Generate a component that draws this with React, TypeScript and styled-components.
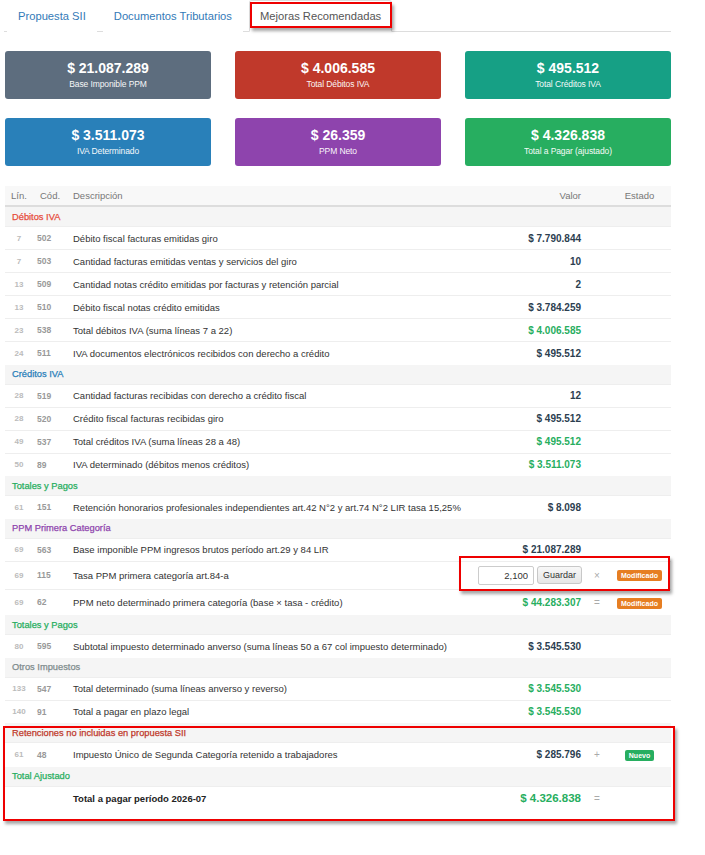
import { JSX } from "react";
import styled, { createGlobalStyle } from "styled-components";

type Tone = "dark" | "green";
type Badge = "mod" | "new";

type SectionRow = { kind: "section"; label: string; color: string };
type ItemRow = {
  kind: "item";
  lin?: string;
  cod?: string;
  desc: string;
  value: string;
  tone?: Tone;
  op?: string;
  badge?: Badge;
  edit?: boolean;
  total?: boolean;
};
type Row = SectionRow | ItemRow;

const GlobalStyle = createGlobalStyle`
  html, body {
    margin: 0;
    padding: 0;
    background: #fff;
  }
  body {
    font-family: "Liberation Sans", Arial, sans-serif;
    color: #333;
  }
`;

const Page = styled.div`
  width: 666px;
  padding: 0 0 30px 5px;
`;

const Nav = styled.ul`
  display: flex;
  list-style: none;
  margin: 0 0 0 -1px;
  padding: 0 0 0 3px;
  border-bottom: 1px solid #ddd;
`;

const TabLink = styled.li<{ $active?: boolean }>`
  position: relative;
  margin: 0 6px -1px 0;
  padding: 8px 10px 8px;
  line-height: 14px;
  font-size: 11.2px;
  border: 1px solid ${(p) => (p.$active ? "#ddd" : "transparent")};
  border-bottom-color: transparent;
  border-radius: 3px 3px 0 0;
  background: #fff;
  color: ${(p) => (p.$active ? "#555" : "#337ab7")};
  cursor: pointer;
`;

const Mark = styled.div`
  position: absolute;
  border: 2px solid #ee0000;
  box-shadow: 2px 3px 3px rgba(0, 0, 0, 0.35);
  pointer-events: none;
`;

const TabMark = styled(Mark)`
  top: 1px;
  left: 0;
  right: -1px;
  bottom: 3px;
`;

const Cards = styled.div`
  display: grid;
  grid-template-columns: repeat(3, 206px);
  column-gap: 24px;
  row-gap: 19px;
  margin-top: 19px;
`;

const Card = styled.div<{ $bg: string }>`
  height: 48px;
  border-radius: 3px;
  background: ${(p) => p.$bg};
  color: #fff;
  text-align: center;
  display: flex;
  flex-direction: column;
  justify-content: center;
  gap: 3px;
`;

const CardValue = styled.div`
  font-size: 14px;
  font-weight: 700;
  line-height: 16px;
`;

const CardLabel = styled.div`
  font-size: 8.5px;
  line-height: 11px;
  letter-spacing: -0.1px;
  opacity: 0.95;
`;

const TableWrap = styled.div`
  position: relative;
  margin-top: 20px;
`;

const Table = styled.table`
  width: 666px;
  border-collapse: collapse;
  table-layout: fixed;
`;

const Th = styled.th<{ $align?: string; $pl?: number }>`
  height: 19px;
  padding: 0 5px 0 ${(p) => p.$pl ?? 5}px;
  background: #f8f8f8;
  border-bottom: 2px solid #ddd;
  font-size: 9.5px;
  font-weight: 400;
  color: #777;
  text-align: ${(p) => p.$align ?? "left"};
`;

const SectionCell = styled.td<{ $color: string }>`
  height: 19px;
  padding: 0 7px;
  background: #f5f5f5;
  color: ${(p) => p.$color};
  font-size: 9.3px;
  -webkit-text-stroke: 0.25px ${(p) => p.$color};
`;

const ItemTr = styled.tr<{ $h: number }>`
  height: ${(p) => p.$h}px;
  border-top: 1px solid #eee;
`;

const LinCell = styled.td`
  padding: 0;
  text-align: center;
  font-size: 8px;
  font-weight: 700;
  color: #bbb;
`;

const CodCell = styled.td`
  padding: 0 0 0 4px;
  font-size: 8.5px;
  font-weight: 700;
  color: #999;
`;

const DescCell = styled.td<{ $bold?: boolean }>`
  padding: 0 5px;
  font-size: 9.5px;
  font-weight: ${(p) => (p.$bold ? 700 : 400)};
  color: ${(p) => (p.$bold ? "#222" : "#333")};
  white-space: nowrap;
  overflow: visible;
`;

const ValueCell = styled.td<{ $tone: Tone; $big?: boolean }>`
  padding: 0 5px;
  text-align: right;
  white-space: nowrap;
  font-size: ${(p) => (p.$big ? "11.5px" : "10px")};
  font-weight: 700;
  color: ${(p) => (p.$tone === "green" ? "#27ae60" : "#2c3e50")};
`;

const OpCell = styled.td`
  padding: 0;
  text-align: center;
  font-size: 10px;
  color: #aaa;
`;

const StateCell = styled.td`
  padding: 0;
  text-align: center;
`;

const EditBox = styled.div`
  display: flex;
  justify-content: flex-end;
  align-items: center;
  gap: 3px;
  margin-right: -1px;
`;

const NumInput = styled.input`
  width: 56px;
  height: 19px;
  box-sizing: border-box;
  border: 1px solid #ccc;
  border-radius: 2px;
  padding: 0 5px;
  text-align: right;
  font-family: inherit;
  font-size: 9.5px;
  color: #333;
`;

const SaveButton = styled.button`
  width: 45px;
  height: 18px;
  box-sizing: border-box;
  border: 1px solid #c8c8c8;
  border-radius: 3px;
  background: linear-gradient(#f8f8f8, #e6e6e6);
  font-family: inherit;
  font-size: 9px;
  color: #333;
  padding: 0;
`;

const Pill = styled.span<{ $kind: Badge }>`
  display: inline-block;
  padding: 0 4px;
  height: 11px;
  line-height: 11px;
  border-radius: 2px;
  background: ${(p) => (p.$kind === "mod" ? "#e67e22" : "#27ae60")};
  color: #fff;
  font-size: 7px;
  font-weight: 700;
  vertical-align: middle;
`;

const EditMark = styled(Mark)`
  left: 454px;
  top: 370px;
  width: 211px;
  height: 35px;
  box-sizing: border-box;
`;

const AddedMark = styled(Mark)`
  left: -2px;
  top: 540px;
  width: 672px;
  height: 95px;
  box-sizing: border-box;
`;

const cards = [
  { value: "$ 21.087.289", label: "Base Imponible PPM", bg: "#5d6d7e" },
  { value: "$ 4.006.585", label: "Total Débitos IVA", bg: "#c0392b" },
  { value: "$ 495.512", label: "Total Créditos IVA", bg: "#16a085" },
  { value: "$ 3.511.073", label: "IVA Determinado", bg: "#2980b9" },
  { value: "$ 26.359", label: "PPM Neto", bg: "#8e44ad" },
  { value: "$ 4.326.838", label: "Total a Pagar (ajustado)", bg: "#27ae60" },
];

const rows: Row[] = [
  { kind: "section", label: "Débitos IVA", color: "#e74c3c" },
  { kind: "item", lin: "7", cod: "502", desc: "Débito fiscal facturas emitidas giro", value: "$ 7.790.844" },
  { kind: "item", lin: "7", cod: "503", desc: "Cantidad facturas emitidas ventas y servicios del giro", value: "10" },
  { kind: "item", lin: "13", cod: "509", desc: "Cantidad notas crédito emitidas por facturas y retención parcial", value: "2" },
  { kind: "item", lin: "13", cod: "510", desc: "Débito fiscal notas crédito emitidas", value: "$ 3.784.259" },
  { kind: "item", lin: "23", cod: "538", desc: "Total débitos IVA (suma líneas 7 a 22)", value: "$ 4.006.585", tone: "green" },
  { kind: "item", lin: "24", cod: "511", desc: "IVA documentos electrónicos recibidos con derecho a crédito", value: "$ 495.512" },
  { kind: "section", label: "Créditos IVA", color: "#2980b9" },
  { kind: "item", lin: "28", cod: "519", desc: "Cantidad facturas recibidas con derecho a crédito fiscal", value: "12" },
  { kind: "item", lin: "28", cod: "520", desc: "Crédito fiscal facturas recibidas giro", value: "$ 495.512" },
  { kind: "item", lin: "49", cod: "537", desc: "Total créditos IVA (suma líneas 28 a 48)", value: "$ 495.512", tone: "green" },
  { kind: "item", lin: "50", cod: "89", desc: "IVA determinado (débitos menos créditos)", value: "$ 3.511.073", tone: "green" },
  { kind: "section", label: "Totales y Pagos", color: "#27ae60" },
  {
    kind: "item",
    lin: "61",
    cod: "151",
    desc: "Retención honorarios profesionales independientes art.42 N°2 y art.74 N°2 LIR tasa 15,25%",
    value: "$ 8.098",
  },
  { kind: "section", label: "PPM Primera Categoría", color: "#8e44ad" },
  { kind: "item", lin: "69", cod: "563", desc: "Base imponible PPM ingresos brutos período art.29 y 84 LIR", value: "$ 21.087.289" },
  { kind: "item", lin: "69", cod: "115", desc: "Tasa PPM primera categoría art.84-a", value: "2,100", edit: true, op: "×", badge: "mod" },
  {
    kind: "item",
    lin: "69",
    cod: "62",
    desc: "PPM neto determinado primera categoría (base × tasa - crédito)",
    value: "$ 44.283.307",
    tone: "green",
    op: "=",
    badge: "mod",
  },
  { kind: "section", label: "Totales y Pagos", color: "#27ae60" },
  {
    kind: "item",
    lin: "80",
    cod: "595",
    desc: "Subtotal impuesto determinado anverso (suma líneas 50 a 67 col impuesto determinado)",
    value: "$ 3.545.530",
  },
  { kind: "section", label: "Otros Impuestos", color: "#7f8c8d" },
  { kind: "item", lin: "133", cod: "547", desc: "Total determinado (suma líneas anverso y reverso)", value: "$ 3.545.530", tone: "green" },
  { kind: "item", lin: "140", cod: "91", desc: "Total a pagar en plazo legal", value: "$ 3.545.530", tone: "green" },
  { kind: "section", label: "Retenciones no incluidas en propuesta SII", color: "#c0392b" },
  {
    kind: "item",
    lin: "61",
    cod: "48",
    desc: "Impuesto Único de Segunda Categoría retenido a trabajadores",
    value: "$ 285.796",
    op: "+",
    badge: "new",
  },
  { kind: "section", label: "Total Ajustado", color: "#27ae60" },
  { kind: "item", desc: "Total a pagar período 2026-07", value: "$ 4.326.838", tone: "green", op: "=", total: true },
];

function rowHeight(r: ItemRow): number {
  if (r.edit) return 28;
  if (r.badge === "mod") return 26;
  if (r.badge === "new" || r.total) return 24;
  return 23;
}

export default function App(): JSX.Element {
  return (
    <Page>
      <GlobalStyle />
      <Nav>
        <TabLink>Propuesta SII</TabLink>
        <TabLink>Documentos Tributarios</TabLink>
        <TabLink $active>
          Mejoras Recomendadas
          <TabMark />
        </TabLink>
      </Nav>

      <Cards>
        {cards.map((c) => (
          <Card key={c.label} $bg={c.bg}>
            <CardValue>{c.value}</CardValue>
            <CardLabel>{c.label}</CardLabel>
          </Card>
        ))}
      </Cards>

      <TableWrap>
        <Table>
          <colgroup>
            <col style={{ width: 28 }} />
            <col style={{ width: 35 }} />
            <col />
            <col style={{ width: 115 }} />
            <col style={{ width: 22 }} />
            <col style={{ width: 63 }} />
          </colgroup>
          <thead>
            <tr>
              <Th $align="center" $pl={5}>Lín.</Th>
              <Th $pl={7}>Cód.</Th>
              <Th>Descripción</Th>
              <Th $align="right">Valor</Th>
              <Th />
              <Th $align="center" $pl={5}>Estado</Th>
            </tr>
          </thead>
          <tbody>
            {rows.map((r, i) =>
              r.kind === "section" ? (
                <tr key={i}>
                  <SectionCell colSpan={6} $color={r.color}>
                    {r.label}
                  </SectionCell>
                </tr>
              ) : (
                <ItemTr key={i} $h={rowHeight(r)}>
                  <LinCell>{r.lin}</LinCell>
                  <CodCell>{r.cod}</CodCell>
                  <DescCell $bold={r.total}>{r.desc}</DescCell>
                  <ValueCell $tone={r.tone ?? "dark"} $big={r.total}>
                    {r.edit ? (
                      <EditBox>
                        <NumInput defaultValue={r.value} />
                        <SaveButton>Guardar</SaveButton>
                      </EditBox>
                    ) : (
                      r.value
                    )}
                  </ValueCell>
                  <OpCell>{r.op}</OpCell>
                  <StateCell>
                    {r.badge && <Pill $kind={r.badge}>{r.badge === "mod" ? "Modificado" : "Nuevo"}</Pill>}
                  </StateCell>
                </ItemTr>
              )
            )}
          </tbody>
        </Table>
        <EditMark />
        <AddedMark />
      </TableWrap>
    </Page>
  );
}
